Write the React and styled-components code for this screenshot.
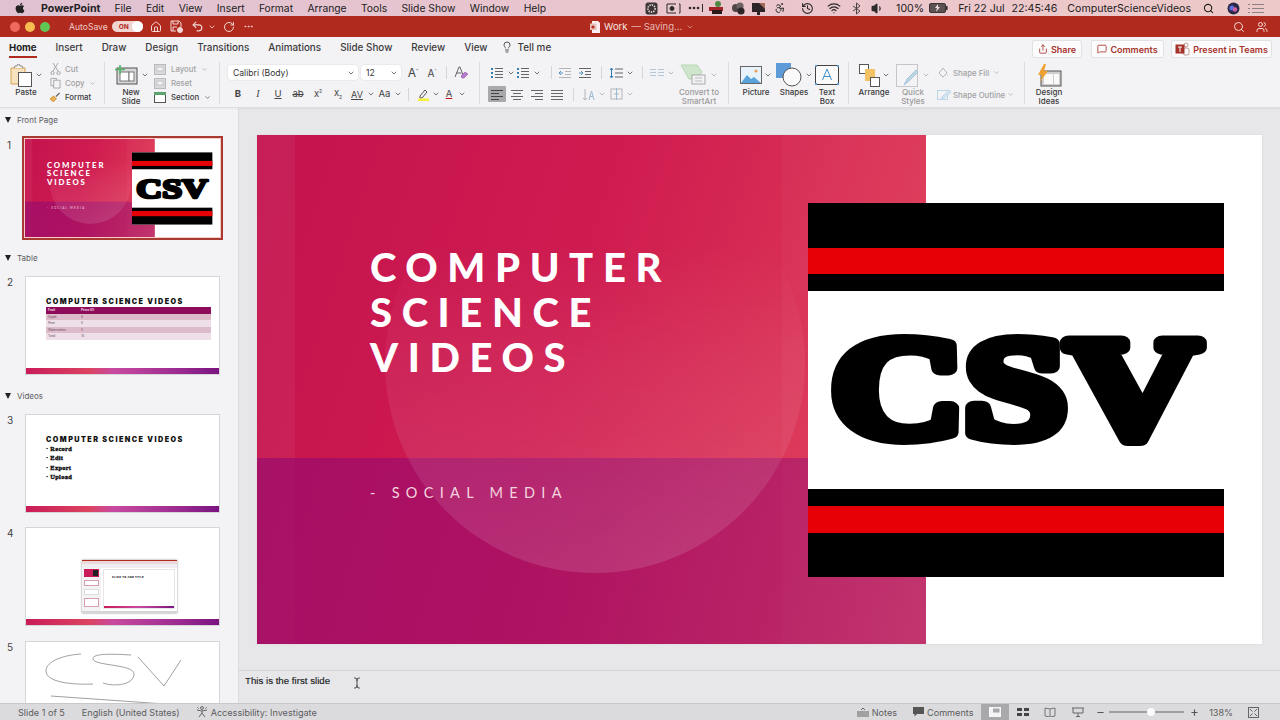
import React from "react";
import styled, { createGlobalStyle, css } from "styled-components";
import { FaApple } from "react-icons/fa";
import {
  Accessibility,
  ChevronDown,
  Home as HomeIcon,
  History,
  Lightbulb,
  MessageSquare,
  MoreHorizontal,
  RotateCw,
  Search,
  Share,
  TextCursor,
  Undo2,
  Users,
  Volume1,
  Wifi,
  Minus,
  Plus,
} from "lucide-react";

const GlobalStyle = createGlobalStyle`
  html, body { margin: 0; padding: 0; width: 1280px; height: 720px; overflow: hidden; background: #e7e7e9; }
  * { box-sizing: border-box; }
  body { font-family: Inter, "Liberation Sans", sans-serif; color: #333; }
`;

const Screen = styled.div`
  width: 1280px;
  height: 720px;
  display: flex;
  flex-direction: column;
  overflow: hidden;
`;

/* mac menu bar */
const MenuBar = styled.div`
  height: 16px;
  flex: none;
  display: flex;
  align-items: center;
  padding-left: 14px;
  background: linear-gradient(90deg, #dfc2d2 0%, #e9c5ce 45%, #eec9c9 100%);
  font-size: 10.3px;
  color: #222;
`;

const MenuItem = styled.span`
  margin-left: ${(p) => p.$ml ?? 0}px;
  margin-right: ${(p) => p.$mr ?? 14.4}px;
  font-weight: ${(p) => (p.$bold ? 700 : 400)};
  font-size: ${(p) => (p.$bold ? "10.6px" : "inherit")};
  white-space: nowrap;
`;

const MenuRight = styled.div`
  margin-left: auto;
  display: flex;
  align-items: center;
  height: 100%;
  padding-right: 16px;
  font-size: 10.6px;
`;

const Slot = styled.span`
  width: ${(p) => p.$w}px;
  height: 100%;
  flex: none;
  display: inline-flex;
  align-items: center;
  justify-content: center;
  border-radius: 1px;
  ${(p) =>
    p.$active &&
    css`
      background: #a9a9ab;
    `}
`;

/* red title bar */
const TitleBar = styled.div`
  height: 21px;
  flex: none;
  display: flex;
  align-items: center;
  position: relative;
  padding-left: 10px;
  background: #b02a1e;
  color: #f3d9d5;
  font-size: 9.5px;
`;

const Light = styled.span`
  width: 10px;
  height: 10px;
  border-radius: 50%;
  margin-right: 5px;
  background: ${(p) => p.$c};
`;

const AutoSave = styled.span`
  margin-left: 14px;
  margin-right: 4px;
  font-size: 8.6px;
  color: #eecdc8;
`;

const Toggle = styled.span`
  width: 31px;
  height: 11px;
  border-radius: 6px;
  background: #f0d5d2;
  color: #b02a1e;
  font-size: 6.5px;
  font-weight: 700;
  display: flex;
  align-items: center;
  padding-left: 7px;
  position: relative;
  margin-right: 4px;
  &::after {
    content: "";
    position: absolute;
    right: 0;
    top: 0;
    width: 11px;
    height: 11px;
    border-radius: 50%;
    background: #fff;
  }
`;

const DocTitle = styled.div`
  position: absolute;
  left: 590px;
  top: 0;
  height: 100%;
  display: flex;
  align-items: center;
  gap: 4px;
  font-size: 9.5px;
  color: #e6b8b2;
  strong {
    font-weight: 400;
    color: #f8e6e3;
  }
`;

const TitleRight = styled.div`
  margin-left: auto;
  display: flex;
  align-items: center;
  height: 100%;
  padding-right: 12px;
  gap: 11px;
`;

/* ribbon tabs */
const TabsRow = styled.div`
  height: 21px;
  flex: none;
  display: flex;
  align-items: stretch;
  padding-left: 9px;
  background: #f3f2f4;
`;

const Tab = styled.span`
  display: flex;
  align-items: center;
  margin-right: ${(p) => p.$mr ?? 19}px;
  padding-bottom: 1px;
  font-size: 9.9px;
  font-weight: 500;
  color: #3c3c3e;
  position: relative;
  white-space: nowrap;
  ${(p) =>
    p.$active &&
    css`
      font-weight: 700;
      font-size: 9.6px;
      color: #222;
      &::after {
        content: "";
        position: absolute;
        left: 0;
        right: 0;
        bottom: 0;
        height: 2px;
        background: #b02a1e;
      }
    `}
`;

const TabActions = styled.div`
  margin-left: auto;
  display: flex;
  align-items: flex-end;
  padding-right: 8px;
`;

const ActionButton = styled.span`
  width: ${(p) => p.$w}px;
  height: 18px;
  margin-left: ${(p) => p.$ml}px;
  display: flex;
  align-items: center;
  justify-content: center;
  gap: 3px;
  background: #fbfbfc;
  border: 1px solid #e2e1e3;
  border-radius: 2px;
  color: #a5332a;
  font-size: 9px;
  font-weight: 600;
  white-space: nowrap;
`;

/* ribbon body */
const Ribbon = styled.div`
  height: 50px;
  flex: none;
  display: flex;
  padding-top: 4px;
  background: #f3f2f4;
  border-bottom: 1px solid #dedee0;
  box-shadow: 0 1px 2px rgba(0, 0, 0, 0.05);
  z-index: 1;
`;

const Group = styled.div`
  width: ${(p) => p.$w}px;
  height: 42px;
  flex: none;
  display: flex;
  padding-left: ${(p) => p.$pl ?? 8}px;
  border-right: ${(p) => (p.$last ? "none" : "1px solid #dcdcde")};
`;

const BigTool = styled.div`
  width: ${(p) => p.$w}px;
  flex: none;
  display: flex;
  flex-direction: column;
  align-items: center;
  color: ${(p) => (p.$off ? "#9a9a9c" : "#3a3a3c")};
`;

const BigIcon = styled.div`
  height: 26px;
  flex: none;
  display: flex;
  align-items: center;
  gap: 2px;
`;

const BigLabel = styled.div`
  font-size: 8px;
  line-height: 9px;
  text-align: center;
  white-space: nowrap;
  font-weight: 500;
`;

const SmallColumn = styled.div`
  display: flex;
  flex-direction: column;
  margin-left: ${(p) => p.$ml ?? 0}px;
  padding-top: ${(p) => p.$pt ?? 0}px;
  gap: ${(p) => p.$gap ?? 0}px;
`;

const SmallTool = styled.div`
  height: 15px;
  display: flex;
  align-items: center;
  gap: ${(p) => p.$gap ?? 4}px;
  font-size: 7.8px;
  font-weight: 500;
  color: ${(p) => (p.$off ? "#a2a2a4" : "#3a3a3c")};
  white-space: nowrap;
`;

const Stack = styled.div`
  display: flex;
  flex-direction: column;
  gap: 6px;
  padding-top: 3px;
  width: ${(p) => (p.$w ? `${p.$w}px` : "auto")};
  flex: none;
`;

const ToolRow = styled.div`
  height: ${(p) => p.$h ?? 16}px;
  display: flex;
  align-items: center;
  color: #444;
  font-size: 9.5px;
`;

const Select = styled.div`
  width: ${(p) => p.$w}px;
  height: 15px;
  margin-right: 3px;
  padding: 0 3px 0 5px;
  display: flex;
  align-items: center;
  justify-content: space-between;
  background: #fff;
  border-radius: 3px;
  font-size: 8.6px;
  color: #333;
  box-shadow: 0 0 0 0.5px #e2e2e4;
`;

const VRule = styled.span`
  width: 1px;
  height: 13px;
  flex: none;
  background: #d6d6d8;
  margin: 0 ${(p) => p.$mr ?? 6}px 0 ${(p) => p.$ml ?? 6}px;
`;

const Glyph = styled.span`
  font-size: ${(p) => p.$s ?? 9.5}px;
  font-weight: ${(p) => p.$weight ?? 400};
  font-style: ${(p) => (p.$italic ? "italic" : "normal")};
  text-decoration: ${(p) => p.$deco ?? "none"};
  font-family: ${(p) => (p.$serif ? '"Liberation Serif", serif' : "inherit")};
  color: ${(p) => p.$c ?? "#444"};
  line-height: 1;
  white-space: nowrap;
  sup, sub {
    font-size: 5px;
  }
`;

/* body */
const Body = styled.div`
  flex: 1;
  min-height: 0;
  display: flex;
`;

const Sidebar = styled.div`
  width: 239px;
  flex: none;
  padding-top: 5px;
  overflow: hidden;
  background: #f3f2f5;
  border-right: 1px solid #dcdcde;
`;

const SectionHead = styled.div`
  height: 14px;
  display: flex;
  align-items: center;
  gap: 6px;
  padding-left: 5px;
  margin-top: ${(p) => p.$mt ?? 0}px;
  margin-bottom: ${(p) => p.$mb ?? 11}px;
  font-size: 8px;
  color: #5c5c5e;
  &::before {
    content: "";
    width: 0;
    height: 0;
    border-left: 3.5px solid transparent;
    border-right: 3.5px solid transparent;
    border-top: 6px solid #222;
  }
`;

const ThumbRow = styled.div`
  display: flex;
  padding-left: 7px;
  margin-bottom: ${(p) => p.$mb ?? 0}px;
`;

const ThumbNumber = styled.span`
  width: ${(p) => (p.$sel ? 15 : 18)}px;
  flex: none;
  padding-top: ${(p) => (p.$sel ? 3 : 0)}px;
  font-size: 10px;
  line-height: 12px;
  color: #444;
`;

const SelectedFrame = styled.div`
  padding: 1px 2px 1px 1px;
  width: 201px;
  border: 2px solid #a83a32;
  background: #f8c9c6;
`;

const Thumb = styled.div`
  width: 195px;
  height: 99px;
  position: relative;
  background: #fff;
  border: 1px solid #d6d6d9;
  overflow: hidden;
  ${(p) =>
    p.$flat &&
    css`
      height: 98px;
      border: none;
    `}
`;

const ThumbFooter = styled.div`
  position: absolute;
  left: 0;
  right: 0;
  bottom: 0;
  height: 6px;
  background: linear-gradient(90deg, #c91b58 0%, #dc4461 33%, #c84aa0 45%, #9a2a90 80%, #7a1480 100%);
`;

const ThumbContent = styled.div`
  padding: 21px 8px 0 20px;
`;

const ThumbTitle = styled.div`
  font-size: 7.2px;
  line-height: 8px;
  font-weight: 900;
  letter-spacing: 1.45px;
  color: #111;
  white-space: nowrap;
`;

const MiniTable = styled.div`
  margin-top: 1px;
  display: flex;
  flex-direction: column;
`;

const MiniTr = styled.div`
  height: 6.6px;
  display: grid;
  grid-template-columns: 33px 33px 33px 33px 33px;
  padding-left: 2px;
  background: ${(p) => p.$bg};
  color: ${(p) => p.$c ?? "#6b4a5c"};
  font-size: 3.2px;
  line-height: 6.6px;
  font-weight: ${(p) => (p.$head ? 700 : 400)};
`;

const BulletList = styled.div`
  display: flex;
  flex-direction: column;
`;

const Bullet = styled.div`
  height: 9.4px;
  font-family: "Liberation Serif", serif;
  font-weight: 700;
  font-size: 6.4px;
  line-height: 9.4px;
  color: #111;
  -webkit-text-stroke: 0.4px #111;
  letter-spacing: 0.3px;
`;

const MiniWindow = styled.div`
  position: absolute;
  left: 56px;
  top: 32px;
  width: 95px;
  height: 53px;
  display: flex;
  flex-direction: column;
  background: #fff;
  box-shadow: 0 0 2px rgba(0, 0, 0, 0.45);
`;

const MiniChrome = styled.div`
  height: 8px;
  flex: none;
  background: linear-gradient(#b02a1e 0 1.5px, #ecd9dc 1.5px 4px, #eeeef0 4px);
`;

const MiniMain = styled.div`
  flex: 1;
  display: flex;
  min-height: 0;
`;

const MiniRail = styled.div`
  width: 19px;
  flex: none;
  padding: 1px 2px;
  display: flex;
  flex-direction: column;
  gap: 3px;
  background: #f3f2f4;
`;

const MiniRailItem = styled.div`
  height: ${(p) => p.$h}px;
  background: ${(p) => p.$bg ?? "#fff"};
  border: 0.5px solid ${(p) => p.$line ?? "#d8a0aa"};
`;

const MiniPage = styled.div`
  flex: 1;
  margin: 1px 2px 2px 2px;
  display: flex;
  flex-direction: column;
  background: #fff;
  border: 0.5px solid #e6e6e6;
`;

const MiniPageText = styled.div`
  flex: 1;
  padding: 5px 0 0 8px;
  font-size: 2.6px;
  font-weight: 800;
  letter-spacing: 0.3px;
  color: #222;
  white-space: nowrap;
`;

const MiniPageBar = styled.div`
  height: 2px;
  background: linear-gradient(90deg, #c91b58, #c84aa0, #7a1480);
`;

const MiniStatus = styled.div`
  height: 2px;
  flex: none;
  background: #d5d5d7;
`;

/* slide */
const Workspace = styled.div`
  flex: 1;
  min-width: 0;
  display: flex;
  flex-direction: column;
  background: #e7e7e9;
`;

const Stage = styled.div`
  height: 562px;
  flex: none;
  padding: 27px 0 0 18px;
`;

const Notes = styled.div`
  flex: 1;
  display: flex;
  align-items: flex-start;
  padding: 4px 0 0 6px;
  border-top: 1px solid #d2d2d4;
  font-family: "Liberation Sans", sans-serif;
  font-size: 9.7px;
  line-height: 11px;
  color: #1c1c1c;
  -webkit-text-stroke: 0.15px #1c1c1c;
`;

const Caret = styled.span`
  margin-left: 21px;
  padding-top: 2px;
  display: inline-flex;
  color: #222;
`;

const ArtScale = styled.div`
  width: 1005px;
  height: 509px;
  transform-origin: 0 0;
  transform: scale(${(p) => p.$scale});
  position: relative;
  display: flex;
  background: #fff;
  box-shadow: ${(p) => (p.$scale === 1 ? "0 0 2px rgba(0, 0, 0, 0.08)" : "none")};
`;

const Panel = styled.div`
  width: 669px;
  height: 100%;
  flex: none;
  position: relative;
  overflow: hidden;
  padding: 110px 0 0 113px;
  background: linear-gradient(108deg, #c4124e 0%, #cf1c50 45%, #dc3556 80%, #e5495d 100%);
  color: #fff;
`;

const PanelStrip = styled.div`
  position: absolute;
  top: 0;
  bottom: 0;
  ${(p) => (p.$right ? "right: 0; width: 144px;" : "left: 0; width: 38px;")}
  background: rgba(255, 255, 255, ${(p) => (p.$right ? 0.03 : 0.05)});
`;

const PanelBand = styled.div`
  position: absolute;
  left: 0;
  right: 0;
  bottom: 0;
  height: 186px;
  background: linear-gradient(100deg, rgba(150, 10, 110, 0.66) 0%, rgba(150, 10, 110, 0.58) 50%, rgba(160, 30, 120, 0.5) 100%);
`;

const PanelCircle = styled.div`
  position: absolute;
  left: 128px;
  top: 18px;
  width: 420px;
  height: 420px;
  border-radius: 50%;
  background: linear-gradient(180deg, rgba(255, 255, 255, 0) 22%, rgba(255, 255, 255, 0.06) 50%, rgba(255, 255, 255, 0.12) 100%);
`;

const SlideTitle = styled.div`
  position: relative;
  font-family: Lato, "Open Sans", sans-serif;
  font-weight: 900;
  font-size: 40px;
  line-height: 45px;
  letter-spacing: 9.6px;
  white-space: nowrap;
`;

const SlideSub = styled.div`
  position: relative;
  margin-top: 105px;
  font-family: Lato, "Open Sans", sans-serif;
  font-size: 14.5px;
  line-height: 16px;
  letter-spacing: 6.3px;
  color: #f3d4de;
  white-space: nowrap;
`;

const LogoBox = styled.svg`
  position: absolute;
  left: 551px;
  top: 68px;
  width: 416px;
  height: 374px;
`;

/* status bar */
const StatusBar = styled.div`
  height: 17px;
  flex: none;
  display: flex;
  align-items: stretch;
  padding-left: 18px;
  background: #dbdbdd;
  border-top: 1px solid #c8c8ca;
  font-size: 9.1px;
  color: #5c5c5e;
  z-index: 2;
`;

const StatusText = styled.span`
  display: flex;
  align-items: center;
  gap: 3px;
  margin-right: ${(p) => p.$mr ?? 0}px;
  white-space: nowrap;
`;

const StatusRight = styled.div`
  margin-left: auto;
  display: flex;
  align-items: stretch;
  padding-right: 19px;
`;

const ZoomTrack = styled.span`
  width: 75px;
  height: 2px;
  align-self: center;
  margin: 0 3px 0 0;
  position: relative;
  background: #9d9d9f;
  &::after {
    content: "";
    position: absolute;
    left: 38px;
    top: -3px;
    width: 8px;
    height: 8px;
    border-radius: 50%;
    background: #fbfbfb;
  }
`;

const Chev = ({ c = "#555", s = 8 }) => <ChevronDown size={s} color={c} strokeWidth={2.4} />;

const LinesIcon = ({ dots, w = 14, c = "#666", align = "left" }) => {
  const rows = [2, 5, 8, 11];
  return (
    <svg width={w} height="13" viewBox="0 0 14 13">
      {rows.map((y, i) => {
        const short = align !== "left" && align !== "full" && i % 2 === 1;
        const len = align === "full" ? 12 : i % 2 === 1 ? 8 : 12;
        const x = align === "center" && short ? 3 : align === "right" && short ? 5 : 1;
        return (
          <rect key={y} x={dots ? 5 : x} y={y} width={dots ? 8 : align === "left" ? len : align === "full" ? 12 : short ? 8 : 12} height="1" fill={c} />
        );
      })}
      {dots &&
        [2, 6, 10].map((y) => <rect key={y} x="1" y={y} width="2" height="2" fill="#2f7fb5" />)}
    </svg>
  );
};

const IndentIcon = ({ c = "#666", out }) => (
  <svg width="14" height="12" viewBox="0 0 14 12" fill="none" stroke={c}>
    <path d="M1 1.5h12M7 4.5h6M7 7.5h6M1 10.5h12" />
    <path d={out ? "M5 6H1M3 4l-2 2 2 2" : "M1 6h4M3 4l2 2-2 2"} stroke="#5d94bd" />
  </svg>
);

const PasteIcon = () => (
  <svg width="24" height="23" viewBox="0 0 24 23" fill="none">
    <path d="M2 4h14v16H2z" fill="#f6e2bf" stroke="#d9a250" />
    <path d="M5 4l1-2h2l1-2h1l1 2h2l1 2" stroke="#888" fill="#f3f2f4" />
    <rect x="9.5" y="8.5" width="13" height="14" fill="#fff" stroke="#555" />
  </svg>
);

const NewSlideIcon = () => (
  <svg width="25" height="20" viewBox="0 0 25 20" fill="none">
    <rect x="3" y="3" width="20" height="16" fill="#d8d8da" stroke="#555" />
    <rect x="6" y="7" width="9" height="9" fill="#fff" stroke="#777" />
    <rect x="15" y="7" width="5" height="9" fill="#fff" stroke="#777" />
    <path d="M6 0v9M1 4.5h10" stroke="#52b46a" strokeWidth="1.6" />
  </svg>
);

const CutIcon = () => (
  <svg width="11" height="12" viewBox="0 0 11 12" fill="none" stroke="#a5a5a7">
    <path d="M3 0l5 8M8 0L3 8" />
    <circle cx="2.5" cy="10" r="1.6" />
    <circle cx="8.5" cy="10" r="1.6" />
  </svg>
);

const CopyIcon = () => (
  <svg width="11" height="12" viewBox="0 0 12 12" fill="none" stroke="#a5a5a7">
    <path d="M1 1h6v8H1z" />
    <path d="M4 3h7v8.5H4z" fill="#f3f2f4" />
  </svg>
);

const BrushIcon = () => (
  <svg width="11" height="12" viewBox="0 0 12 12" fill="none">
    <path d="M0 8l4-3 3 3-3 3-2-1z" fill="#e9b35a" stroke="#c88c2f" />
    <path d="M6 5l4-4 1 1-4 4z" fill="#666" />
  </svg>
);

const SlideLayoutIcon = ({ top }) => (
  <svg width="12" height="11" viewBox="0 0 12 11" fill="none">
    <rect x="0.5" y="0.5" width="11" height="10" fill={top ? "#fff" : "#d9d9dc"} stroke={top ? "#555" : "#b9b9bb"} />
    {top ? (
      <rect x="0" y="0" width="12" height="3" fill="#5aa56e" />
    ) : (
      <rect x="3" y="3" width="6" height="4" fill="#f2f2f3" stroke="#c4c4c6" />
    )}
  </svg>
);

const PenIcon = () => (
  <svg width="13" height="13" viewBox="0 0 13 13" fill="none">
    <path d="M3 8l5-6 2 2-5 6H3z" stroke="#555" fill="#f3f2f4" />
    <rect x="1" y="10.5" width="11" height="2.5" fill="#f5f03a" />
  </svg>
);

const ClearIcon = () => (
  <svg width="14" height="13" viewBox="0 0 14 13" fill="none">
    <path d="M1 11L5 1h1l3 8" stroke="#666" />
    <path d="M2.5 7h5" stroke="#666" />
    <path d="M7 10l4-4 3 2-4 4H8z" fill="#b77bd0" stroke="#8c56a8" strokeWidth="0.6" />
  </svg>
);

const SpacingIcon = () => (
  <svg width="14" height="12" viewBox="0 0 14 12" fill="none">
    <path d="M2.5 1v10M1 3l1.5-2L4 3M1 9l1.5 2L4 9" stroke="#2f7fb5" />
    <path d="M6 2h8M6 6h8M6 10h8" stroke="#666" />
  </svg>
);

const ColumnsIcon = () => (
  <svg width="14" height="9" viewBox="0 0 14 9" stroke="#b6c8d8">
    <path d="M0 1.5h6M8 1.5h6M0 4.5h6M8 4.5h6M0 7.5h6M8 7.5h6" />
  </svg>
);

const SmartArtIcon = () => (
  <svg width="28" height="22" viewBox="0 0 28 22" fill="none">
    <path d="M1 1h16l5 7-5 7H9L5 8z" fill="#cfe6cd" stroke="#b7d6b5" />
    <rect x="12" y="11" width="13" height="9" fill="#f3f2f4" stroke="#aaa" />
    <path d="M15 14h7M15 17h7" stroke="#bbb" />
  </svg>
);

const DirectionIcon = () => (
  <svg width="13" height="13" viewBox="0 0 13 13" fill="none" stroke="#b6b6b8">
    <path d="M3 1v11M1 10l2 2 2-2" />
    <path d="M7 12l2.5-9L12 12M8 8.5h3" stroke="#9cbad0" />
  </svg>
);

const AlignBoxIcon = () => (
  <svg width="13" height="12" viewBox="0 0 13 12" fill="none" stroke="#b6b6b8">
    <rect x="1" y="1" width="11" height="10" />
    <path d="M6.5 0v12M4 6h5" stroke="#9cbad0" />
  </svg>
);

const PictureIcon = () => (
  <svg width="22" height="18" viewBox="0 0 22 18">
    <rect x="0.5" y="0.5" width="21" height="17" fill="#e8f2fa" stroke="#666" />
    <path d="M1 17l6-8 4 4 3-2 7 6z" fill="#58a3da" />
    <circle cx="16" cy="5" r="1.6" fill="#e8a35a" />
  </svg>
);

const ShapesIcon = () => (
  <svg width="27" height="24" viewBox="0 0 27 24">
    <rect x="0" y="0" width="15" height="15" fill="#5d9bd8" />
    <circle cx="16" cy="14" r="9" fill="#fafafa" stroke="#555" />
  </svg>
);

const TextBoxIcon = () => (
  <svg width="24" height="20" viewBox="0 0 24 20">
    <rect x="0.5" y="0.5" width="23" height="19" fill="#fafafa" stroke="#444" />
    <rect x="0" y="0" width="2" height="2" fill="#5d9bd8" />
    <rect x="22" y="0" width="2" height="2" fill="#5d9bd8" />
    <rect x="0" y="18" width="2" height="2" fill="#5d9bd8" />
    <rect x="22" y="18" width="2" height="2" fill="#5d9bd8" />
    <path d="M7.5 15L12 4l4.5 11M9 11.5h6" fill="none" stroke="#3f8fc9" />
  </svg>
);

const ArrangeIcon = () => (
  <svg width="21" height="23" viewBox="0 0 21 23">
    <rect x="0.5" y="0.5" width="9" height="9" fill="#fff" stroke="#555" />
    <rect x="6" y="5" width="10" height="12" fill="#f2c264" />
    <rect x="11.5" y="13.5" width="9" height="9" fill="#fff" stroke="#555" />
  </svg>
);

const QuickStylesIcon = () => (
  <svg width="24" height="23" viewBox="0 0 24 23" fill="none">
    <rect x="0.5" y="0.5" width="21" height="22" fill="#f4f4f6" stroke="#c6c6c8" />
    <path d="M8 21l3-6 9-9 2 2-9 9z" fill="#bcd6e8" stroke="#a8c4d8" />
  </svg>
);

const FillIcon = () => (
  <svg width="12" height="11" viewBox="0 0 12 11" fill="none" stroke="#b4b4b6">
    <path d="M2 6l4-5 4 5-4 4z" />
    <path d="M10 7l1 2" stroke="#cfe0ee" />
  </svg>
);

const OutlineIcon = () => (
  <svg width="14" height="11" viewBox="0 0 14 11" fill="none">
    <rect x="0.5" y="1.5" width="10" height="9" stroke="#bcd6e8" />
    <path d="M4 9l8-8 2 2-8 7z" fill="#d4e6f2" stroke="#bcd6e8" />
  </svg>
);

const DesignIcon = () => (
  <svg width="25" height="23" viewBox="0 0 25 23" fill="none">
    <rect x="4" y="7" width="20" height="15" fill="#cfcfd1" stroke="#555" />
    <rect x="7" y="10" width="9" height="10" fill="#fafafa" />
    <rect x="17" y="10" width="5" height="10" fill="#fafafa" />
    <path d="M7 0L1 11h4l-2 7 8-11H7l2-7z" fill="#efa230" />
  </svg>
);

const TeamsIcon = () => (
  <svg width="15" height="15" viewBox="0 0 15 15" fill="none">
    <circle cx="11" cy="3" r="2" stroke="#c59a96" />
    <rect x="8" y="6" width="6" height="7" rx="2" stroke="#c59a96" />
    <rect x="0.5" y="2.5" width="9" height="9" fill="#a5332a" />
    <path d="M3 5h4M5 5v5" stroke="#fff" />
  </svg>
);

const SaveIcon = () => (
  <svg width="13" height="13" viewBox="0 0 13 13" fill="none" stroke="#f3d9d5">
    <path d="M1 1h8l2 2v4M1 1v10h5" />
    <path d="M3 1v3h5V1M3 11V7h4" />
    <circle cx="10" cy="10" r="2.5" fill="#f3d9d5" />
  </svg>
);

const PptDocIcon = () => (
  <svg width="10" height="12" viewBox="0 0 10 12">
    <path d="M2 0h6l2 2v10H2z" fill="#fbeeee" />
    <rect x="0" y="2.5" width="6.5" height="6.5" fill="#e8c0ba" />
    <circle cx="3" cy="6" r="1.6" fill="#b02a1e" />
  </svg>
);

const ChipIcon = () => (
  <svg width="13" height="13" viewBox="0 0 13 13">
    <rect x="0.5" y="0.5" width="12" height="12" rx="2.5" fill="#3c3638" />
    <circle cx="6.5" cy="6.5" r="3.6" fill="none" stroke="#e8d6d6" strokeDasharray="1.4 1" strokeWidth="1.6" />
  </svg>
);

const CameraBox = () => (
  <svg width="15" height="11" viewBox="0 0 15 11" fill="none" stroke="#2a2a2a">
    <path d="M10 1H1v9h9M13 1h1v9h-1" />
    <circle cx="6" cy="5.5" r="2" fill="#2a2a2a" />
  </svg>
);

const DotsBar = () => (
  <svg width="16" height="8" viewBox="0 0 16 8" fill="#2a2a2a">
    <circle cx="2" cy="4" r="1.3" />
    <circle cx="6" cy="4" r="1.3" />
    <circle cx="10" cy="4" r="1.3" />
    <rect x="14" y="0" width="1" height="8" />
  </svg>
);

const CherryIcon = () => (
  <svg width="16" height="14" viewBox="0 0 16 14">
    <circle cx="9" cy="3" r="3" fill="#4f8a45" />
    <rect x="0" y="6" width="14" height="4" fill="#a3222a" />
    <rect x="3" y="9" width="10" height="4" fill="#2a1a1c" />
  </svg>
);

const CloudIcon = () => (
  <svg width="15" height="13" viewBox="0 0 15 13">
    <circle cx="5" cy="6" r="4" fill="#4c4446" />
    <circle cx="9" cy="4" r="3.6" fill="#6c6264" />
    <circle cx="10" cy="9" r="3.6" fill="#2c2628" />
  </svg>
);

const FolderMark = () => (
  <svg width="15" height="13" viewBox="0 0 15 13">
    <path d="M1 1h13v9H1z" fill="#2c2426" />
    <path d="M8 1h6v6z" fill="#a26a5a" />
    <rect x="6" y="10" width="3" height="3" fill="#2c2426" />
  </svg>
);

const BatteryIcon = () => (
  <svg width="19" height="10" viewBox="0 0 19 10">
    <rect x="0.5" y="0.5" width="16" height="9" rx="1.5" fill="#5c5254" stroke="#3a3234" />
    <rect x="17" y="3" width="1.6" height="4" fill="#3a3234" />
    <path d="M9 1L6 5h2l-1 4 4-5H9z" fill="#f0dcdc" />
  </svg>
);

const SiriIcon = () => (
  <svg width="13" height="13" viewBox="0 0 13 13">
    <circle cx="6.5" cy="6.5" r="6" fill="#2a2a48" />
    <circle cx="5" cy="6" r="2.6" fill="#5a6ee0" />
    <circle cx="8" cy="7.5" r="2.2" fill="#d060a0" />
  </svg>
);

const ListMark = () => (
  <svg width="16" height="11" viewBox="0 0 16 11" stroke="#8a8284">
    <path d="M4 1.5h12M4 5.5h12M4 9.5h12" />
    <path d="M0 1.5h2M0 5.5h2M0 9.5h2" />
  </svg>
);

const BluetoothMark = () => (
  <svg width="13" height="13" viewBox="0 0 13 13" fill="none" stroke="#4a4244">
    <path d="M6.5 1v11M3 4l7 5-3.5 3V1L10 4 3 9" />
  </svg>
);

const NotesIcon = () => (
  <svg width="12" height="10" viewBox="0 0 12 10" fill="none" stroke="#666">
    <path d="M0 5h12M0 7h12M0 9h12M4 3l2-2 2 2" />
  </svg>
);

const BubbleIcon = () => (
  <svg width="11" height="10" viewBox="0 0 11 10" fill="#555">
    <path d="M0 0h11v7H4L1.5 9.5V7H0z" />
  </svg>
);

const NormalViewIcon = () => (
  <svg width="12" height="10" viewBox="0 0 12 10">
    <rect width="12" height="10" fill="#f5f5f5" />
    <rect x="4" y="1.5" width="6.5" height="4" fill="#a8a8aa" />
  </svg>
);

const SorterIcon = () => (
  <svg width="12" height="8" viewBox="0 0 12 8" fill="#444">
    <rect x="0" y="0" width="5" height="3" />
    <rect x="7" y="0" width="5" height="3" />
    <rect x="0" y="5" width="5" height="3" />
    <rect x="7" y="5" width="5" height="3" />
  </svg>
);

const ReadingIcon = () => (
  <svg width="12" height="10" viewBox="0 0 12 10" fill="none" stroke="#777">
    <path d="M1 1l5 1 5-1v8L6 10 1 9zM6 2v8" />
  </svg>
);

const PresenterIcon = () => (
  <svg width="12" height="10" viewBox="0 0 12 10" fill="none" stroke="#666">
    <path d="M0 1h12M1 1v5h10V1M6 6v3M4 9.5h4" />
  </svg>
);

const FitIcon = () => (
  <svg width="11" height="11" viewBox="0 0 11 11" fill="none" stroke="#666">
    <rect x="0.5" y="0.5" width="10" height="10" />
    <path d="M2 2l2.5 2.5M9 2L6.5 4.5M2 9l2.5-2.5M9 9L6.5 6.5" />
  </svg>
);

const A11yIcon = () => (
  <svg width="12" height="12" viewBox="0 0 12 12" fill="none" stroke="#666">
    <circle cx="6" cy="2" r="1.4" />
    <path d="M1 4l5 1 5-1M6 5v2M3 11l3-4 3 4" />
    <path d="M1 1l2 2M11 1L9 3" strokeDasharray="1 1" />
  </svg>
);

// the slide itself, also used scaled down for the first thumbnail
const SlideArt = ({ scale = 1 }) => (
  <ArtScale $scale={scale}>
    <Panel>
      <PanelStrip />
      <PanelStrip $right />
      <PanelBand />
      <PanelCircle />
      <SlideTitle>
        COMPUTER
        <br />
        SCIENCE
        <br />
        VIDEOS
      </SlideTitle>
      <SlideSub>- SOCIAL MEDIA</SlideSub>
    </Panel>
    <LogoBox viewBox="0 0 416 374">
      <rect x="0" y="0" width="416" height="374" fill="#fff" />
      <rect x="0" y="0" width="416" height="88" fill="#000" />
      <rect x="0" y="45" width="416" height="26" fill="#e60005" />
      <rect x="0" y="286" width="416" height="88" fill="#000" />
      <rect x="0" y="303" width="416" height="27" fill="#e60005" />
      <text
        x="23"
        y="234"
        fontFamily="'Liberation Serif', serif"
        fontWeight="700"
        fontSize="144"
        textLength="369"
        lengthAdjust="spacingAndGlyphs"
        fill="#000"
        stroke="#000"
        strokeWidth="14"
        strokeLinejoin="round"
      >
        CSV
      </text>
    </LogoBox>
  </ArtScale>
);

const SketchThumb = () => (
  <svg width="193" height="97" viewBox="0 0 193 97" fill="none" stroke="#888" strokeWidth="0.8">
    <path d="M55 12C38 13 20 19 20 29C20 40 45 43 67 42" />
    <path d="M105 13C88 12 66 11 67 17C68 24 108 22 108 32C108 43 88 45 77 41" />
    <path d="M112 15L138 44L155 18" />
    <path d="M25 54L153 63" />
  </svg>
);

const tableRows = [
  ["Apple", "8", "#dcbccb"],
  ["Pear", "5", "#eedfe8"],
  ["Watermelon", "5", "#dcbccb"],
  ["Total", "15", "#eedfe8"],
];

const MiniThumb = () => (
  <MiniWindow>
    <MiniChrome />
    <MiniMain>
      <MiniRail>
        <MiniRailItem $h={8} $bg="linear-gradient(90deg, #c91b58 60%, #222 60%)" $line="#c91b58" />
        <MiniRailItem $h={6} />
        <MiniRailItem $h={6} $line="#ddd" />
        <MiniRailItem $h={9} />
      </MiniRail>
      <MiniPage>
        <MiniPageText>CLICK TO ADD TITLE</MiniPageText>
        <MiniPageBar />
      </MiniPage>
    </MiniMain>
    <MiniStatus />
  </MiniWindow>
);

const MenuIcons = () => (
  <>
    <Slot $w={16}><ChipIcon /></Slot>
    <Slot $w={28}><CameraBox /></Slot>
    <Slot $w={18}><DotsBar /></Slot>
    <Slot $w={24}><CherryIcon /></Slot>
    <Slot $w={18}><CloudIcon /></Slot>
    <Slot $w={22}><FolderMark /></Slot>
    <Slot $w={22}><Accessibility size={12} color="#2a2a2a" /></Slot>
    <Slot $w={32}><History size={13} color="#2a2a2a" /></Slot>
    <Slot $w={22}><Wifi size={14} color="#2a2a2a" /></Slot>
    <Slot $w={22}><BluetoothMark /></Slot>
    <Slot $w={20}><Volume1 size={13} color="#2a2a2a" fill="#2a2a2a" /></Slot>
  </>
);

export default function App() {
  return (
    <>
      <GlobalStyle />
      <Screen>
        <MenuBar>
          <FaApple size={12} color="#222" />
          <MenuItem $bold $ml={15} $mr={14}>PowerPoint</MenuItem>
          <MenuItem>File</MenuItem>
          <MenuItem>Edit</MenuItem>
          <MenuItem>View</MenuItem>
          <MenuItem>Insert</MenuItem>
          <MenuItem>Format</MenuItem>
          <MenuItem>Arrange</MenuItem>
          <MenuItem>Tools</MenuItem>
          <MenuItem>Slide Show</MenuItem>
          <MenuItem>Window</MenuItem>
          <MenuItem>Help</MenuItem>
          <MenuRight>
            <MenuIcons />
            <MenuItem $ml={9} $mr={5}>100%</MenuItem>
            <BatteryIcon />
            <MenuItem $ml={10} $mr={7}>Fri 22 Jul</MenuItem>
            <MenuItem $mr={10}>22:45:46</MenuItem>
            <MenuItem $mr={7}>ComputerScienceVideos</MenuItem>
            <Slot $w={20}><Search size={11} color="#222" strokeWidth={2.4} /></Slot>
            <Slot $w={30}><SiriIcon /></Slot>
            <Slot $w={16}><ListMark /></Slot>
          </MenuRight>
        </MenuBar>

        <TitleBar>
          <Light $c="#ee6a5f" />
          <Light $c="#f5bd4f" />
          <Light $c="#61c554" />
          <AutoSave>AutoSave</AutoSave>
          <Toggle>ON</Toggle>
          <Slot $w={18}><HomeIcon size={12} color="#f3d9d5" /></Slot>
          <Slot $w={24}><SaveIcon /></Slot>
          <Slot $w={18}><Undo2 size={13} color="#f3d9d5" /></Slot>
          <Slot $w={10}><Chev c="#f3d9d5" /></Slot>
          <Slot $w={24}><RotateCw size={12} color="#f3d9d5" /></Slot>
          <Slot $w={16}><MoreHorizontal size={11} color="#f3d9d5" /></Slot>
          <DocTitle>
            <PptDocIcon />
            <strong>Work</strong> — Saving... <Chev c="#d99a92" />
          </DocTitle>
          <TitleRight>
            <Search size={12} color="#f3d9d5" />
            <Users size={12} color="#f3d9d5" />
          </TitleRight>
        </TitleBar>

        <TabsRow>
          <Tab $active>Home</Tab>
          <Tab>Insert</Tab>
          <Tab>Draw</Tab>
          <Tab>Design</Tab>
          <Tab>Transitions</Tab>
          <Tab>Animations</Tab>
          <Tab>Slide Show</Tab>
          <Tab>Review</Tab>
          <Tab $mr={13}>View</Tab>
          <Tab $mr={5}><Lightbulb size={12} color="#555" /></Tab>
          <Tab>Tell me</Tab>
          <TabActions>
            <ActionButton $w={50} $ml={0}><Share size={10} />Share</ActionButton>
            <ActionButton $w={73} $ml={9}><MessageSquare size={10} />Comments</ActionButton>
            <ActionButton $w={101} $ml={7}><TeamsIcon />Present in Teams</ActionButton>
          </TabActions>
        </TabsRow>

        <Ribbon>
          <Group $w={105}>
            <BigTool $w={36}>
              <BigIcon><PasteIcon /><Chev /></BigIcon>
              <BigLabel>Paste</BigLabel>
            </BigTool>
            <SmallColumn $ml={6}>
              <SmallTool $off><CutIcon />Cut</SmallTool>
              <SmallTool $off><CopyIcon />Copy <Chev c="#aaa" s={7} /></SmallTool>
              <SmallTool><BrushIcon />Format</SmallTool>
            </SmallColumn>
          </Group>
          <Group $w={115}>
            <BigTool $w={36}>
              <BigIcon><NewSlideIcon /><Chev /></BigIcon>
              <BigLabel>New<br />Slide</BigLabel>
            </BigTool>
            <SmallColumn $ml={5}>
              <SmallTool $off $gap={5}><SlideLayoutIcon />Layout <Chev c="#aaa" s={7} /></SmallTool>
              <SmallTool $off $gap={5}><SlideLayoutIcon />Reset</SmallTool>
              <SmallTool $gap={5}><SlideLayoutIcon top />Section <Chev s={7} /></SmallTool>
            </SmallColumn>
          </Group>
          <Group $w={260}>
            <Stack>
              <ToolRow $h={15}>
                <Select $w={130}>Calibri (Body)<Chev /></Select>
                <Select $w={40}>12<Chev /></Select>
                <Slot $w={18}><Glyph $s={12}>A<sup>^</sup></Glyph></Slot>
                <Slot $w={20}><Glyph $s={10}>A<sup>ˇ</sup></Glyph></Slot>
                <VRule $ml={4} $mr={5} />
                <Slot $w={18}><ClearIcon /></Slot>
              </ToolRow>
              <ToolRow>
                <Slot $w={20}><Glyph $weight={700}>B</Glyph></Slot>
                <Slot $w={20}><Glyph $italic $serif $s={10}>I</Glyph></Slot>
                <Slot $w={20}><Glyph $deco="underline">U</Glyph></Slot>
                <Slot $w={20}><Glyph $deco="line-through">ab</Glyph></Slot>
                <Slot $w={20}><Glyph>x<sup>2</sup></Glyph></Slot>
                <Slot $w={20}><Glyph>x<sub>2</sub></Glyph></Slot>
                <Slot $w={18}><Glyph $s={9} $deco="underline">AV</Glyph></Slot>
                <Slot $w={10}><Chev /></Slot>
                <Slot $w={17}><Glyph>Aa</Glyph></Slot>
                <Slot $w={9}><Chev /></Slot>
                <VRule $ml={6} $mr={6} />
                <Slot $w={16}><PenIcon /></Slot>
                <Slot $w={10}><Chev /></Slot>
                <Slot $w={16}><Glyph $deco="underline #c8161d">A</Glyph></Slot>
                <Slot $w={10}><Chev /></Slot>
              </ToolRow>
            </Stack>
          </Group>
          <Group $w={249}>
            <Stack $w={190}>
              <ToolRow $h={15}>
                <Slot $w={18}><LinesIcon dots /></Slot>
                <Slot $w={9}><Chev /></Slot>
                <Slot $w={16}><LinesIcon dots /></Slot>
                <Slot $w={12}><Chev /></Slot>
                <VRule $ml={8} $mr={4} />
                <Slot $w={18}><IndentIcon c="#b5b5b7" out /></Slot>
                <Slot $w={2} />
                <Slot $w={18}><IndentIcon /></Slot>
                <VRule $ml={7} $mr={5} />
                <Slot $w={18}><SpacingIcon /></Slot>
                <Slot $w={10}><Chev /></Slot>
                <VRule $ml={7} $mr={5} />
                <Slot $w={18}><ColumnsIcon /></Slot>
                <Slot $w={10}><Chev c="#aaa" /></Slot>
              </ToolRow>
              <ToolRow>
                <Slot $w={18} $active><LinesIcon c="#444" /></Slot>
                <Slot $w={1} />
                <Slot $w={20}><LinesIcon align="center" /></Slot>
                <Slot $w={20}><LinesIcon align="right" /></Slot>
                <Slot $w={20}><LinesIcon align="full" /></Slot>
                <VRule $ml={6} $mr={5} />
                <Slot $w={18}><DirectionIcon /></Slot>
                <Slot $w={10}><Chev c="#aaa" /></Slot>
                <Slot $w={18}><AlignBoxIcon /></Slot>
                <Slot $w={10}><Chev c="#aaa" /></Slot>
              </ToolRow>
            </Stack>
            <BigTool $w={42} $off>
              <BigIcon><SmartArtIcon /><Chev c="#aaa" /></BigIcon>
              <BigLabel>Convert to<br />SmartArt</BigLabel>
            </BigTool>
          </Group>
          <Group $w={120}>
            <BigTool $w={38}>
              <BigIcon><PictureIcon /><Chev /></BigIcon>
              <BigLabel>Picture</BigLabel>
            </BigTool>
            <BigTool $w={38}>
              <BigIcon><ShapesIcon /><Chev /></BigIcon>
              <BigLabel>Shapes</BigLabel>
            </BigTool>
            <BigTool $w={28}>
              <BigIcon><TextBoxIcon /></BigIcon>
              <BigLabel>Text<br />Box</BigLabel>
            </BigTool>
          </Group>
          <Group $w={176} $pl={6}>
            <BigTool $w={38}>
              <BigIcon><ArrangeIcon /><Chev /></BigIcon>
              <BigLabel>Arrange</BigLabel>
            </BigTool>
            <BigTool $w={40} $off>
              <BigIcon><QuickStylesIcon /><Chev c="#aaa" /></BigIcon>
              <BigLabel>Quick<br />Styles</BigLabel>
            </BigTool>
            <SmallColumn $ml={4} $pt={3} $gap={7}>
              <SmallTool $off $gap={4}><FillIcon />Shape Fill <Chev c="#aaa" s={7} /></SmallTool>
              <SmallTool $off $gap={2}><OutlineIcon />Shape Outline <Chev c="#aaa" s={7} /></SmallTool>
            </SmallColumn>
          </Group>
          <Group $w={256} $pl={6} $last>
            <BigTool $w={36}>
              <BigIcon><DesignIcon /></BigIcon>
              <BigLabel>Design<br />Ideas</BigLabel>
            </BigTool>
          </Group>
        </Ribbon>

        <Body>
          <Sidebar>
            <SectionHead $mb={9}>Front Page</SectionHead>
            <ThumbRow>
              <ThumbNumber $sel>1</ThumbNumber>
              <SelectedFrame>
                <Thumb $flat>
                  <SlideArt scale={0.194} />
                </Thumb>
              </SelectedFrame>
            </ThumbRow>
            <SectionHead $mt={11}>Table</SectionHead>
            <ThumbRow>
              <ThumbNumber>2</ThumbNumber>
              <Thumb>
                <ThumbContent>
                  <ThumbTitle>COMPUTER SCIENCE VIDEOS</ThumbTitle>
                  <MiniTable>
                    <MiniTr $head $bg="#8e0a5a" $c="#f5dbe8">
                      <span>Fruit</span>
                      <span>Price (£)</span>
                    </MiniTr>
                    {tableRows.map(([name, price, bg]) => (
                      <MiniTr key={name} $bg={bg}>
                        <span>{name}</span>
                        <span>{price}</span>
                      </MiniTr>
                    ))}
                  </MiniTable>
                </ThumbContent>
                <ThumbFooter />
              </Thumb>
            </ThumbRow>
            <SectionHead $mt={14}>Videos</SectionHead>
            <ThumbRow $mb={14}>
              <ThumbNumber>3</ThumbNumber>
              <Thumb>
                <ThumbContent>
                  <ThumbTitle>COMPUTER SCIENCE VIDEOS</ThumbTitle>
                  <BulletList>
                    <Bullet>· Record</Bullet>
                    <Bullet>· Edit</Bullet>
                    <Bullet>· Export</Bullet>
                    <Bullet>· Upload</Bullet>
                  </BulletList>
                </ThumbContent>
                <ThumbFooter />
              </Thumb>
            </ThumbRow>
            <ThumbRow $mb={15}>
              <ThumbNumber>4</ThumbNumber>
              <Thumb>
                <MiniThumb />
                <ThumbFooter />
              </Thumb>
            </ThumbRow>
            <ThumbRow>
              <ThumbNumber>5</ThumbNumber>
              <Thumb>
                <SketchThumb />
              </Thumb>
            </ThumbRow>
          </Sidebar>

          <Workspace>
            <Stage>
              <SlideArt />
            </Stage>
            <Notes>
              This is the first slide
              <Caret><TextCursor size={12} strokeWidth={1.6} /></Caret>
            </Notes>
          </Workspace>
        </Body>

        <StatusBar>
          <StatusText $mr={17}>Slide 1 of 5</StatusText>
          <StatusText $mr={16}>English (United States)</StatusText>
          <StatusText><A11yIcon />Accessibility: Investigate</StatusText>
          <StatusRight>
            <StatusText $mr={16}><NotesIcon />Notes</StatusText>
            <StatusText $mr={8}><BubbleIcon />Comments</StatusText>
            <Slot $w={28} $active><NormalViewIcon /></Slot>
            <Slot $w={27}><SorterIcon /></Slot>
            <Slot $w={28}><ReadingIcon /></Slot>
            <Slot $w={27}><PresenterIcon /></Slot>
            <Slot $w={18}><Minus size={9} color="#555" strokeWidth={3} /></Slot>
            <ZoomTrack />
            <Slot $w={14}><Plus size={9} color="#555" strokeWidth={3} /></Slot>
            <StatusText $mr={12}>&nbsp;&nbsp;&nbsp;138%</StatusText>
            <Slot $w={16}><FitIcon /></Slot>
          </StatusRight>
        </StatusBar>
      </Screen>
    </>
  );
}
